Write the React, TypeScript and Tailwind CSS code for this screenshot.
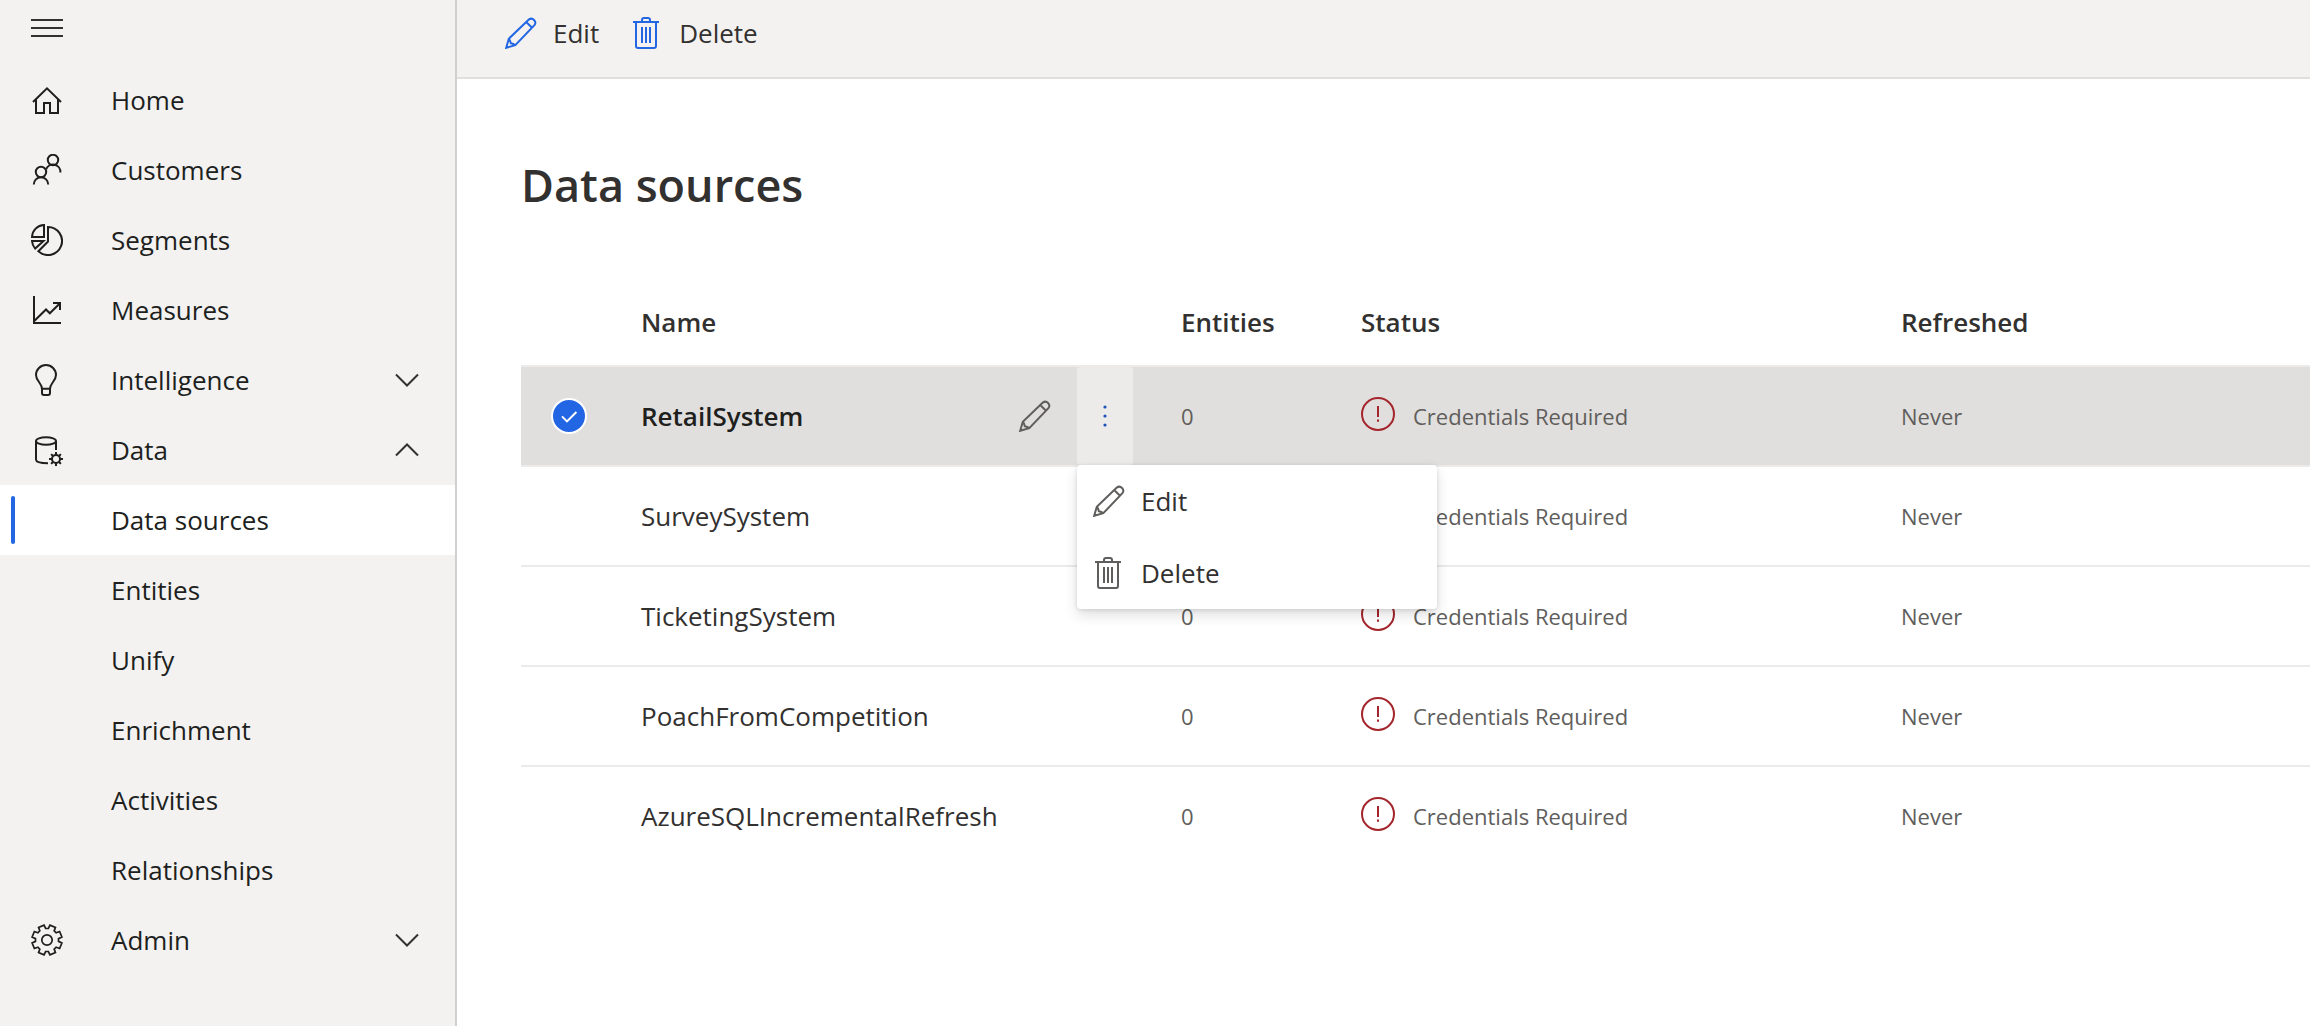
import type { ReactNode } from "react";

type IconProps = { className?: string };

function Icon({ className = "", children }: IconProps & { children: ReactNode }) {
  return (
    <svg
      viewBox="0 0 32 32"
      className={`size-8 shrink-0 ${className}`}
      fill="none"
      stroke="currentColor"
      strokeWidth="2"
      aria-hidden="true"
    >
      {children}
    </svg>
  );
}

/** Closed outline of a cog with square notches between its teeth. */
function cogPath(cx: number, cy: number, outer: number, inner: number, teeth: number) {
  const step = 360 / teeth;
  const points: string[] = [];
  const add = (deg: number, r: number) => {
    const a = (deg * Math.PI) / 180;
    points.push(`${(cx + r * Math.sin(a)).toFixed(2)} ${(cy - r * Math.cos(a)).toFixed(2)}`);
  };
  for (let i = 0; i < teeth; i++) {
    const notch = i * step;
    add(notch - step * 0.15, inner);
    add(notch + step * 0.15, inner);
    add(notch + step * 0.25, outer);
    add(notch + step * 0.75, outer);
  }
  return `M${points.join("L")}Z`;
}

const MenuIcon = () => (
  <Icon>
    <path d="M0 8H32M0 16H32M0 24H32" />
  </Icon>
);
const HomeIcon = () => (
  <Icon>
    <path d="M2 18 16 4.4 30 18M5 15.5V29H13V19H19V29H27V15.5" />
  </Icon>
);
const CustomersIcon = () => (
  <Icon>
    <circle cx="22" cy="6" r="5.2" />
    <circle cx="10" cy="18" r="5.2" />
    <path d="M2.8 30.5A7.2 7.2 0 0 1 17.2 30.5M15.2 15.1A7.4 7.4 0 0 1 29.4 18.5" />
  </Icon>
);
const SegmentsIcon = () => (
  <Icon>
    <path d="M13 1V13H1C1.2 6.5 6.5 1.2 13 1ZM1 17H12.5L4.2 24.6C2 22.2 1.2 20 1 17ZM17 3A14 14 0 1 1 7.4 27.2L17 17.5Z" />
  </Icon>
);
const MeasuresIcon = () => (
  <Icon>
    <path d="M3 2V29H30M3.5 26.8 15 15.5 18.8 19.3 29 9.2M22 9H29V16" />
  </Icon>
);
const BulbIcon = () => (
  <Icon>
    <path d="M11 25C11 19 5 17 5 11A10 10 0 0 1 25 11C25 17 19 19 19 25M11 24.8H19M11 25V29A2 2 0 0 0 13 31H17A2 2 0 0 0 19 29V25" />
  </Icon>
);
const DataIcon = () => (
  <Icon>
    <ellipse cx="15" cy="7" rx="10" ry="3.8" />
    <path d="M5 7V25.5C5 28 10 29.2 17 29.2M25 7V16" />
    <circle cx="25" cy="25" r="4" />
    <path d="M25 18V21M25 29V32M18 25H21M29 25H32M20.1 20.1L22.2 22.2M27.8 27.8L29.9 29.9M29.9 20.1L27.8 22.2M22.2 27.8L20.1 29.9" />
  </Icon>
);
const SettingsIcon = () => (
  <Icon>
    <path d={cogPath(16, 16, 15.2, 11.6, 8)} strokeWidth="1.7" />
    <circle cx="16" cy="16" r="5.2" strokeWidth="1.7" />
  </Icon>
);
const PencilIcon = ({ className }: IconProps) => (
  <Icon className={className}>
    <path d="M1.2 30.8 3.8 21.7 23.8 2.6A4 4 0 0 1 29.4 8.2L10.3 28.2ZM21.2 5 27 10.8M3.8 21.7C5 23 5.4 23.6 5.8 26.2C8.4 26.6 9 27 10.3 28.2" />
  </Icon>
);
const TrashIcon = ({ className }: IconProps) => (
  <Icon className={className}>
    <path d="M2 5H28M5 5V29A2 2 0 0 0 7 31H23A2 2 0 0 0 25 29V5M11 5V3A2 2 0 0 1 13 1H17A2 2 0 0 1 19 3V5M11 10V26M15 10V26M19 10V26" />
  </Icon>
);
const Chevron = ({ up = false }: { up?: boolean }) => (
  <svg viewBox="0 0 24 14" className="h-[14px] w-6 shrink-0 text-[#323130]" fill="none" stroke="currentColor" strokeWidth="2" aria-hidden="true">
    <path d={up ? "M1 12.5 12 1.5 23 12.5" : "M1 1.5 12 12.5 23 1.5"} />
  </svg>
);
const ErrorIcon = () => (
  <svg viewBox="0 0 34 38" className="h-[38px] w-[34px] shrink-0 text-[#a4262c]" fill="none" stroke="currentColor" strokeWidth="2" aria-hidden="true">
    <circle cx="17" cy="17" r="16" />
    <path d="M17 9V20M17 22.4V24.8" />
  </svg>
);

type NavEntry = {
  label: string;
  icon: () => ReactNode;
  expanded?: boolean;
  children?: string[];
};

const NAV: NavEntry[] = [
  { label: "Home", icon: HomeIcon },
  { label: "Customers", icon: CustomersIcon },
  { label: "Segments", icon: SegmentsIcon },
  { label: "Measures", icon: MeasuresIcon },
  { label: "Intelligence", icon: BulbIcon, expanded: false },
  {
    label: "Data",
    icon: DataIcon,
    expanded: true,
    children: ["Data sources", "Entities", "Unify", "Enrichment", "Activities", "Relationships"],
  },
  { label: "Admin", icon: SettingsIcon, expanded: false },
];

function NavItem({ entry }: { entry: NavEntry }) {
  const Glyph = entry.icon;
  const row = "flex h-[70px] w-full items-center gap-12 pr-9 pl-[31px] text-left";
  if (entry.expanded === undefined) {
    return (
      <li>
        <a href="#" className={row}>
          <Glyph />
          {entry.label}
        </a>
      </li>
    );
  }
  return (
    <li>
      <button type="button" aria-expanded={entry.expanded} className={row}>
        <Glyph />
        <span className="flex-1">{entry.label}</span>
        <Chevron up={entry.expanded} />
      </button>
      {entry.children && (
        <ul>
          {entry.children.map((label, i) => (
            <li key={label}>
              <a
                href="#"
                aria-current={i === 0 ? "page" : undefined}
                className={`flex h-[70px] items-center gap-24 pl-[11px] ${i === 0 ? "bg-white" : ""}`}
              >
                <span className={`h-12 w-1 rounded-sm ${i === 0 ? "bg-[#2266e3]" : ""}`} />
                {label}
              </a>
            </li>
          ))}
        </ul>
      )}
    </li>
  );
}

const SOURCES = ["RetailSystem", "SurveySystem", "TicketingSystem", "PoachFromCompetition", "AzureSQLIncrementalRefresh"];

function RowActions() {
  return (
    <div className="flex self-stretch pr-12">
      <button type="button" aria-label="Edit RetailSystem" className="px-[26px] text-[#605e5c]">
        <PencilIcon />
      </button>
      <div className="relative flex">
        <button
          type="button"
          aria-label="More actions"
          aria-expanded="true"
          className="flex w-14 items-center justify-center rounded-sm bg-[#edebe9] text-[#1d52b8]"
        >
          <svg viewBox="0 0 32 32" className="size-8" fill="currentColor" aria-hidden="true">
            <circle cx="16" cy="7" r="1.6" />
            <circle cx="16" cy="16" r="1.6" />
            <circle cx="16" cy="25" r="1.6" />
          </svg>
        </button>
        <div
          role="menu"
          className="absolute top-full left-0 z-10 w-[360px] rounded-sm bg-white text-[26px] font-normal text-[#323130] shadow-[0_6px_14px_rgba(0,0,0,0.13),0_1px_4px_rgba(0,0,0,0.11)]"
        >
          <button type="button" role="menuitem" className="flex h-[72px] w-full items-center gap-4 px-4">
            <PencilIcon className="text-[#605e5c]" />
            Edit
          </button>
          <button type="button" role="menuitem" className="flex h-[72px] w-full items-center gap-4 px-4">
            <TrashIcon className="text-[#605e5c]" />
            Delete
          </button>
        </div>
      </div>
    </div>
  );
}

export default function App() {
  return (
    <div className="flex min-h-screen bg-white font-['Open_Sans','Noto_Sans',sans-serif] text-[26px] leading-9 text-[#323130]">
      <nav aria-label="Main" className="w-[457px] shrink-0 border-r-2 border-[#d2d0ce] bg-[#f3f2f1] text-[#201f1e]">
        <div className="h-[65px] px-[31px] pt-3">
          <button type="button" aria-label="Collapse navigation" className="block text-[#323130]">
            <MenuIcon />
          </button>
        </div>
        <ul>
          {NAV.map((entry) => (
            <NavItem key={entry.label} entry={entry} />
          ))}
        </ul>
      </nav>

      <div className="min-w-0 flex-1">
        <div role="toolbar" aria-label="Commands" className="flex h-[79px] gap-8 border-b-2 border-[#e1dfdd] bg-[#f3f2f1] pb-3 pl-12">
          <button type="button" className="flex items-center gap-4">
            <PencilIcon className="text-[#2266e3]" />
            Edit
          </button>
          <button type="button" className="flex items-center gap-4">
            <TrashIcon className="text-[#2266e3]" />
            Delete
          </button>
        </div>

        <main className="pt-[74px] pl-16">
          <h1 className="text-[45px] leading-[64px] font-semibold">Data sources</h1>
          <table className="mt-[62px] w-full table-fixed border-separate border-spacing-0 text-left">
            <colgroup>
              <col className="w-[120px]" />
              <col className="w-[540px]" />
              <col className="w-[180px]" />
              <col className="w-[540px]" />
              <col />
            </colgroup>
            <thead>
              <tr className="h-[88px] *:border-b-2 *:border-[#edebe9] *:font-semibold">
                <td />
                <th scope="col">Name</th>
                <th scope="col">Entities</th>
                <th scope="col">Status</th>
                <th scope="col">Refreshed</th>
              </tr>
            </thead>
            <tbody className="text-[22px] text-[#605e5c]">
              {SOURCES.map((name, i) => {
                const selected = i === 0;
                return (
                  <tr
                    key={name}
                    className={`*:border-b-2 *:border-[#edebe9] *:p-0 last:*:border-transparent ${selected ? "bg-[#e1dfdd]" : ""}`}
                  >
                    <td>
                      {selected && (
                        <label className="relative ml-[30px] flex size-9 items-center justify-center text-white">
                          <input
                            type="checkbox"
                            defaultChecked
                            aria-label={`Select ${name}`}
                            className="size-9 appearance-none rounded-full border-2 border-white bg-[#2266e3]"
                          />
                          <svg viewBox="0 0 36 36" className="absolute size-9" fill="none" stroke="currentColor" strokeWidth="2" aria-hidden="true">
                            <path d="M11 18.4 16 23.4 25.4 14" />
                          </svg>
                        </label>
                      )}
                    </td>
                    <th scope="row" className="font-normal">
                      <div
                        className={`flex h-[98px] items-center justify-between text-[26px] ${selected ? "font-semibold text-[#201f1e]" : "text-[#323130]"}`}
                      >
                        {name}
                        {selected && <RowActions />}
                      </div>
                    </th>
                    <td>0</td>
                    <td>
                      <div className="flex items-center gap-[18px]">
                        <ErrorIcon />
                        Credentials Required
                      </div>
                    </td>
                    <td>Never</td>
                  </tr>
                );
              })}
            </tbody>
          </table>
        </main>
      </div>
    </div>
  );
}
